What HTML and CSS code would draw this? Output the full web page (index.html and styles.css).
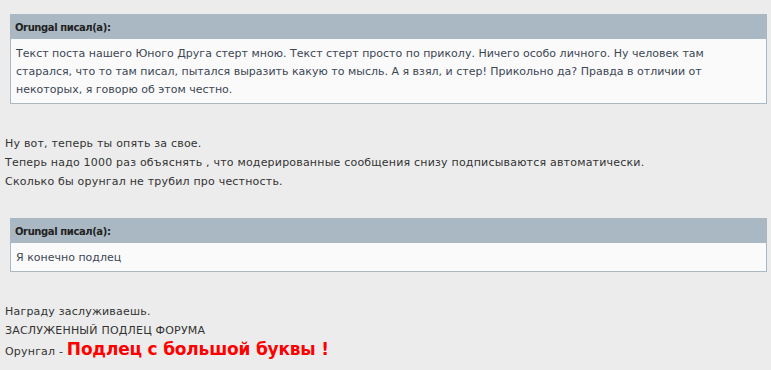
FILE: index.html
```html
<!DOCTYPE html>
<html lang="ru">
<head>
  <meta charset="UTF-8">
  <title>Цитаты</title>
  <link rel="stylesheet" href="styles.css">
</head>
<body>
  <div class="post">
    <div class="quote">
      <div class="quote-title">Orungal писал(а):</div>
      <div class="quote-body">Текст поста нашего Юного Друга стерт мною. Текст стерт просто по приколу. Ничего особо личного. Ну человек там старался, что то там писал, пытался выразить какую то мысль. А я взял, и стер! Прикольно да? Правда в отличии от некоторых, я говорю об этом честно.</div>
    </div>
    <p class="text">Ну вот, теперь ты опять за свое.<br>
    Теперь надо 1000 раз объяснять , что модерированные сообщения снизу подписываются автоматически.<br>
    Сколько бы орунгал не трубил про честность.</p>
    <div class="quote">
      <div class="quote-title">Orungal писал(а):</div>
      <div class="quote-body">Я конечно подлец</div>
    </div>
    <p class="text">Награду заслуживаешь.<br>
    ЗАСЛУЖЕННЫЙ ПОДЛЕЦ ФОРУМА<br>
    Орунгал - <span class="big">Подлец с большой буквы !</span></p>
  </div>
</body>
</html>
```

FILE: styles.css
```css
body {
  margin: 0;
  padding: 14px 4px 0 5px;
  background-color: #ececec;
  font-family: "DejaVu Sans", Verdana, sans-serif;
  font-size: 11px;
  color: #333;
}
.quote {
  margin: 0 0 0 5px;
  border: 1px solid #a9b8c2;
  background-color: #fafafa;
}
.quote-title {
  padding: 7px 4px 6px;
  background-color: #a9b8c2;
  font-size: 10px;
  font-weight: bold;
  letter-spacing: -0.4px;
  color: #222;
}
.quote-body {
  padding: 6px 5px 4px;
  line-height: 18px;
  color: #3c4754;
}
.text {
  margin: 30px 0 27px;
  line-height: 19px;
  letter-spacing: 0.2px;
}
.big {
  font-size: 17px;
  font-weight: bold;
  letter-spacing: -0.2px;
  color: #ff0000;
}
```
